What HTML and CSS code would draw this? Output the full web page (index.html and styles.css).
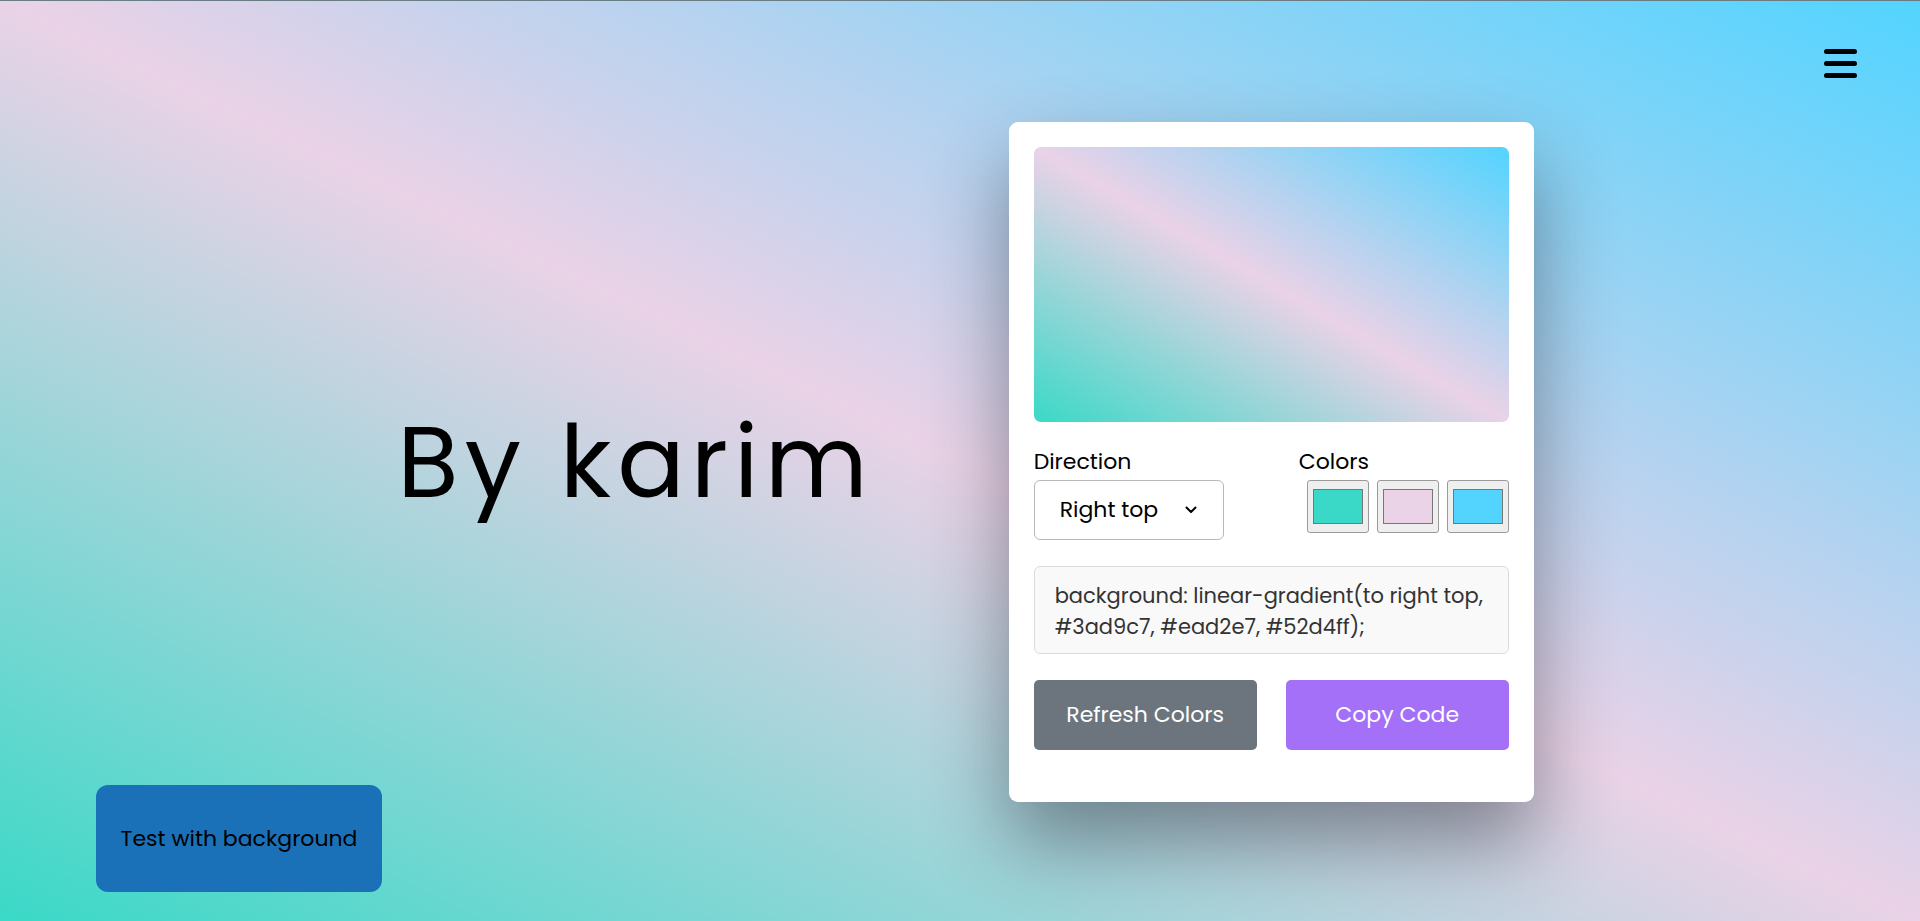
FILE: index.html
```html
<!DOCTYPE html>
<html lang="en">
<head>
<meta charset="utf-8">
<title>Gradient Generator</title>
<link rel="stylesheet" href="styles.css">
</head>
<body>
<div class="page">
  <button class="menu" aria-label="menu">
    <svg width="33" height="29" viewBox="0 0 33 29"><rect x="0" y="0" width="33" height="5" rx="2.5"/><rect x="0" y="12" width="33" height="5" rx="2.5"/><rect x="0" y="24" width="33" height="5" rx="2.5"/></svg>
  </button>
  <main class="main">
    <h1 class="title">By karim</h1>
    <div class="card">
      <div class="preview"></div>
      <div class="options">
        <div class="field">
          <p class="label">Direction</p>
          <div class="select">
            <span>Right top</span>
            <svg width="12" height="8" viewBox="0 0 12 8"><path d="M1.5 1.5 L6 6 L10.5 1.5" fill="none" stroke="#000" stroke-width="2" stroke-linecap="round" stroke-linejoin="round"/></svg>
          </div>
        </div>
        <div class="field colors-field">
          <p class="label">Colors</p>
          <div class="colors">
            <input type="color" value="#3ad9c7">
            <input type="color" value="#ead2e7">
            <input type="color" value="#52d4ff">
          </div>
        </div>
      </div>
      <div class="code">background: linear-gradient(to right top, #3ad9c7, #ead2e7, #52d4ff);</div>
      <div class="buttons">
        <button class="btn refresh">Refresh Colors</button>
        <button class="btn copy">Copy Code</button>
      </div>
    </div>
  </main>
  <button class="test">Test with background</button>
</div>
</body>
</html>
```
FILE: styles.css
```css
* { box-sizing: border-box; }
html, body { margin: 0; padding: 0; height: 100%; }
body {
  font-family: "Poppins", "Open Sans", sans-serif;
  background: linear-gradient(to right top, #3ad9c7, #ead2e7, #52d4ff);
  border-top: 1px solid #6b7d84;
  overflow: hidden;
}
.page {
  position: relative;
  height: 920px;
}
.menu {
  position: absolute;
  top: 48px;
  right: 63px;
  border: 0;
  background: none;
  padding: 0;
  line-height: 0;
}
.main {
  height: 100%;
  display: flex;
  align-items: center;
  justify-content: center;
  gap: 135px;
  padding: 1px 0 0 11px;
}
.title {
  margin: 0;
  font-weight: 400;
  font-size: 100px;
  letter-spacing: 6px;
  color: #000;
}
.card {
  width: 525px;
  height: 680px;
  background: #fff;
  border-radius: 9px;
  padding: 25px 25px 0;
  box-shadow: 0 40px 80px rgba(20, 30, 40, 0.45);
}
.preview {
  height: 275px;
  border-radius: 7px;
  background: linear-gradient(to right top, #3ad9c7, #ead2e7, #52d4ff);
}
.options {
  display: flex;
  justify-content: space-between;
  margin-top: 25px;
}
.label {
  margin: 0 0 3px;
  font-size: 22px;
  line-height: 30px;
  color: #000;
}
.select {
  width: 190px;
  height: 60px;
  border: 1px solid #b8b8b8;
  border-radius: 6px;
  display: flex;
  align-items: center;
  justify-content: space-between;
  padding: 0 26px 0 25px;
  font-size: 22px;
  color: #000;
}
.colors-field .label { margin-left: -8px; }
.colors {
  display: flex;
  gap: 8px;
}
.colors input {
  width: 62px;
  height: 53px;
  margin: 0;
  padding: 4px 3px;
  border: 1px solid #9a9a9a;
  border-radius: 3px;
  background: #efefef;
}
.code {
  margin-top: 26px;
  height: 88px;
  background: #f9f9f9;
  border: 1px solid #dcdcdc;
  border-radius: 6px;
  padding: 13px 20px;
  font-size: 21px;
  line-height: 31px;
  color: #333;
}
.buttons {
  display: flex;
  justify-content: space-between;
  margin-top: 26px;
}
.btn {
  width: 223px;
  height: 70px;
  border: 0;
  border-radius: 5px;
  font-family: inherit;
  font-size: 22px;
  color: #fff;
}
.refresh { background: #6c757d; }
.copy { background: #a370f7; }
.test {
  position: absolute;
  left: 96px;
  top: 784px;
  width: 286px;
  height: 107px;
  border: 0;
  border-radius: 12px;
  background: #1b71b8;
  font-family: inherit;
  font-size: 22px;
  color: #000;
}
```
